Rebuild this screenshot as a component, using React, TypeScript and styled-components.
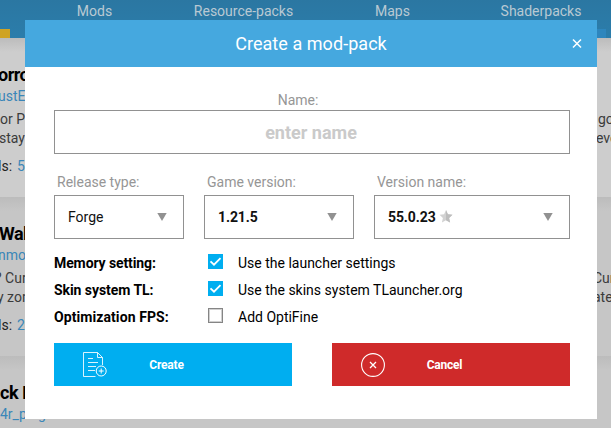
import React from "react";
import styled, { createGlobalStyle } from "styled-components";

const GlobalStyle = createGlobalStyle`
  *, *::before, *::after { box-sizing: border-box; }
  body {
    margin: 0;
    overflow: hidden;
    font-family: Roboto, "Liberation Sans", sans-serif;
    font-size: 14px;
    color: #000;
  }
`;

const Page = styled.div`
  width: 611px;
  height: 428px;
  overflow: hidden;
  position: relative;
  background: #c6c6c6;
`;

const NavBar = styled.nav`
  height: 38px;
  display: grid;
  grid-template-columns: 189px 109px 189px 108px 16px;
  align-items: start;
  background: linear-gradient(#2b77a2 0, #2b7dab 100%);
`;

const NavItem = styled.span`
  height: 22px;
  line-height: 22px;
  text-align: center;
  white-space: nowrap;
  color: #b9c9d3;
`;

const Tabs = styled.div`
  height: 9px;
  margin-top: -9px;
  display: flex;
  justify-content: space-between;
  padding-right: 5px;
`;

const Tab = styled.span<{ $color: string }>`
  width: 10px;
  background: ${(p) => p.$color};
`;

const Card = styled.article<{ $tone: string }>`
  height: 159px;
  padding-top: 27px;
  overflow: hidden;
  background: linear-gradient(#bcbcbc 0, ${(p) => p.$tone} 14px);
`;

const CardTitle = styled.h2<{ $shift: number }>`
  margin: 0 0 0 ${(p) => p.$shift}px;
  font-size: 18px;
  line-height: 20px;
  font-weight: 700;
  letter-spacing: -0.5px;
  white-space: nowrap;
`;

const Author = styled.div<{ $shift: number }>`
  margin-left: ${(p) => p.$shift}px;
  height: 22px;
  line-height: 22px;
  color: #3a86b8;
  white-space: nowrap;
`;

const Description = styled.div`
  padding-top: 3px;
`;

const Line = styled.div`
  display: grid;
  grid-template-columns: 590px 21px;
  height: 19px;
  line-height: 19px;
  color: #3b3b3b;
  white-space: nowrap;
`;

const Fragment = styled.span<{ $shift: number }>`
  margin-left: ${(p) => p.$shift}px;
`;

const Stats = styled.div`
  margin: 9px 0 0 -2px;
  line-height: 19px;
  color: #222;
`;

const Count = styled.span`
  margin-left: 5px;
  color: #3a86b8;
`;

const Dialog = styled.section`
  position: absolute;
  left: 25px;
  top: 20px;
  width: 572px;
  height: 399px;
  background: #fff;
`;

const DialogHeader = styled.header`
  height: 47px;
  display: grid;
  grid-template-columns: 41px 1fr 41px;
  align-items: center;
  background: #45a8df;
  color: #fff;
`;

const DialogTitle = styled.h1`
  grid-column: 2;
  margin: 0;
  font-size: 18px;
  line-height: 24px;
  font-weight: 400;
  text-align: center;
  letter-spacing: 0.05px;
`;

const CloseButton = styled.button`
  width: 12px;
  height: 12px;
  padding: 0;
  border: 0;
  margin-left: 15px;
  background: none;
  display: flex;
`;

const Form = styled.div`
  padding: 24px 27px 0 29px;
`;

const NameLabel = styled.label`
  display: block;
  height: 19px;
  line-height: 19px;
  text-align: center;
  padding-right: 28px;
  color: #969696;
`;

const NameInput = styled.input`
  display: block;
  width: 516px;
  height: 44px;
  padding: 0 2px 0 0;
  border: 1px solid #919191;
  border-radius: 0;
  outline: 0;
  text-align: center;
  font: 700 18px Roboto, sans-serif;

  &::placeholder { color: #cacaca; opacity: 1; }
`;

const Selects = styled.div`
  display: grid;
  grid-template-columns: 130px 150px 196px;
  column-gap: 20px;
  margin-top: 18px;
`;

const FieldLabel = styled.div`
  height: 23px;
  line-height: 20px;
  padding-left: 3px;
  color: #969696;
`;

const SelectBox = styled.div<{ $bold?: boolean }>`
  height: 44px;
  display: flex;
  align-items: center;
  padding: 0 16px 0 13px;
  border: 1px solid #919191;
  color: #111;
  font-weight: ${(p) => (p.$bold ? 700 : 400)};
  letter-spacing: ${(p) => (p.$bold ? "-0.1px" : "0")};
  svg:last-child { margin-left: auto; }
`;

const Star = styled.svg`
  margin: -2px 0 0 3px;
`;

const Options = styled.div`
  margin-top: 10px;
`;

const OptionRow = styled.div`
  height: 27px;
  display: grid;
  grid-template-columns: 154px 30px 1fr;
  align-items: center;
  line-height: 20px;
`;

const OptionName = styled.span<{ $spacing: number }>`
  font-weight: 700;
  letter-spacing: ${(p) => p.$spacing}px;
`;

const Check = styled.span<{ $on: boolean }>`
  width: 15px;
  height: 15px;
  margin-top: -2px;
  display: flex;
  background: ${(p) => (p.$on ? "#00aef0" : "#fff")};
  border: ${(p) => (p.$on ? "0" : "1px solid #858585")};
  box-shadow: ${(p) => (p.$on ? "none" : "inset 0 0 0 1px #d0d0d0")};
`;

const Actions = styled.div`
  display: flex;
  justify-content: space-between;
  margin-top: 13px;
`;

const ActionButton = styled.button<{ $color: string }>`
  width: 238px;
  height: 43px;
  display: grid;
  grid-template-columns: 24px 119px;
  align-items: center;
  padding: 0 0 0 29px;
  border: 0;
  background: ${(p) => p.$color};
  color: #fff;
  font: 700 12px Roboto, sans-serif;
  letter-spacing: -0.2px;
  text-align: center;
`;

const Arrow = () => (
  <svg width="10" height="8" viewBox="0 0 10 8">
    <path d="M0.3 0H9.7L5 8Z" fill="#919191" />
  </svg>
);

const Checkbox = ({ on }: { on: boolean }) => (
  <Check $on={on}>
    {on && (
      <svg width="15" height="15" viewBox="0 0 15 15" fill="none">
        <path d="M2.5 7.3 6 10.7 12.5 4.2" stroke="#fff" strokeWidth="1.8" />
      </svg>
    )}
  </Check>
);

const cards = [
  {
    tone: "#cdcdcd", title: "orro", titleShift: -2, author: "ustE", authorShift: -2,
    lines: [["or Pr", 0, "go", 8], ["stay", -1, "eve", 6]] as const, count: "5",
  },
  {
    tone: "#c6c6c6", title: "Wal", titleShift: -1, author: "nmo", authorShift: -2,
    lines: [["? Cur", -5, "Cur", 3], ["y zon", -3, "ate", 3]] as const, count: "2",
  },
  {
    tone: "#c6c6c6", title: "ck I", titleShift: 0, author: "4r_ping", authorShift: 0,
    lines: [] as const, count: "",
  },
];

const options = [
  { name: "Memory setting:", spacing: -0.1, text: "Use the launcher settings", on: true },
  { name: "Skin system TL:", spacing: -0.06, text: "Use the skins system TLauncher.org", on: true },
  { name: "Optimization FPS:", spacing: 0.08, text: "Add OptiFine", on: false },
];

export default function App() {
  return (
    <>
      <GlobalStyle />
      <Page>
        <NavBar>
          <NavItem>Mods</NavItem>
          <NavItem>Resource-packs</NavItem>
          <NavItem>Maps</NavItem>
          <NavItem>Shaderpacks</NavItem>
        </NavBar>
        <Tabs>
          <Tab $color="#cfa324" />
          <Tab $color="#2e86bd" />
        </Tabs>
        {cards.map((card) => (
          <Card key={card.title} $tone={card.tone}>
            <CardTitle $shift={card.titleShift}>{card.title}</CardTitle>
            <Author $shift={card.authorShift}>{card.author}</Author>
            <Description>
              {card.lines.map(([left, ls, right, rs]) => (
                <Line key={left}>
                  <Fragment $shift={ls}>{left}</Fragment>
                  <Fragment $shift={rs}>{right}</Fragment>
                </Line>
              ))}
            </Description>
            {card.count && <Stats>ls:<Count>{card.count}</Count></Stats>}
          </Card>
        ))}

        <Dialog>
          <DialogHeader>
            <DialogTitle>Create a mod-pack</DialogTitle>
            <CloseButton aria-label="Close">
              <svg width="12" height="12" viewBox="0 0 12 12" fill="none">
                <path d="M2 1.5 10 9.5M10 1.5 2 9.5" stroke="#fff" strokeWidth="1.5" />
              </svg>
            </CloseButton>
          </DialogHeader>
          <Form>
            <NameLabel htmlFor="pack-name">Name:</NameLabel>
            <NameInput id="pack-name" placeholder="enter name" />
            <Selects>
              <div>
                <FieldLabel>Release type:</FieldLabel>
                <SelectBox>Forge<Arrow /></SelectBox>
              </div>
              <div>
                <FieldLabel>Game version:</FieldLabel>
                <SelectBox $bold>1.21.5<Arrow /></SelectBox>
              </div>
              <div>
                <FieldLabel>Version name:</FieldLabel>
                <SelectBox $bold>
                  55.0.23
                  <Star width="14" height="13" viewBox="0 0 14 13">
                    <path d="M7 0 8.9 4.3 13.5 4.8 10.1 7.9 11.1 12.6 7 10.2 2.9 12.6 3.9 7.9 0.5 4.8 5.1 4.3Z" fill="#d2d2d2" />
                    <path d="M7 0 8.9 4.3 13.5 4.8 10.1 7.9 11.1 12.6 7 10.2Z" fill="#bdbdbd" />
                  </Star>
                  <Arrow />
                </SelectBox>
              </div>
            </Selects>
            <Options>
              {options.map((o) => (
                <OptionRow key={o.name}>
                  <OptionName $spacing={o.spacing}>{o.name}</OptionName>
                  <Checkbox on={o.on} />
                  <span>{o.text}</span>
                </OptionRow>
              ))}
            </Options>
            <Actions>
              <ActionButton $color="#00aef0">
                <svg width="24" height="25" viewBox="0 0 24 25" fill="none" stroke="#fff" strokeWidth="1">
                  <path d="M12.5 24.5H0.5V0.5H14.5L19.5 5.5V13M14.5 0.5V5.5H19.5" strokeOpacity=".85" />
                  <path d="M5 6.5H10M5 10.5H15M5 14.5H13M5 18.5H12" strokeOpacity=".85" />
                  <circle cx="18.2" cy="19" r="5" />
                  <path d="M18.2 16.5V21.5M15.7 19H20.7" />
                </svg>
                <span>Create</span>
              </ActionButton>
              <ActionButton $color="#cf2a2a">
                <svg width="24" height="24" viewBox="0 0 24 24" fill="none" stroke="#fff">
                  <circle cx="12" cy="12" r="11.4" strokeWidth="1.1" />
                  <path d="M9 9 15 15M15 9 9 15" strokeWidth="1.3" />
                </svg>
                <span>Cancel</span>
              </ActionButton>
            </Actions>
          </Form>
        </Dialog>
      </Page>
    </>
  );
}
